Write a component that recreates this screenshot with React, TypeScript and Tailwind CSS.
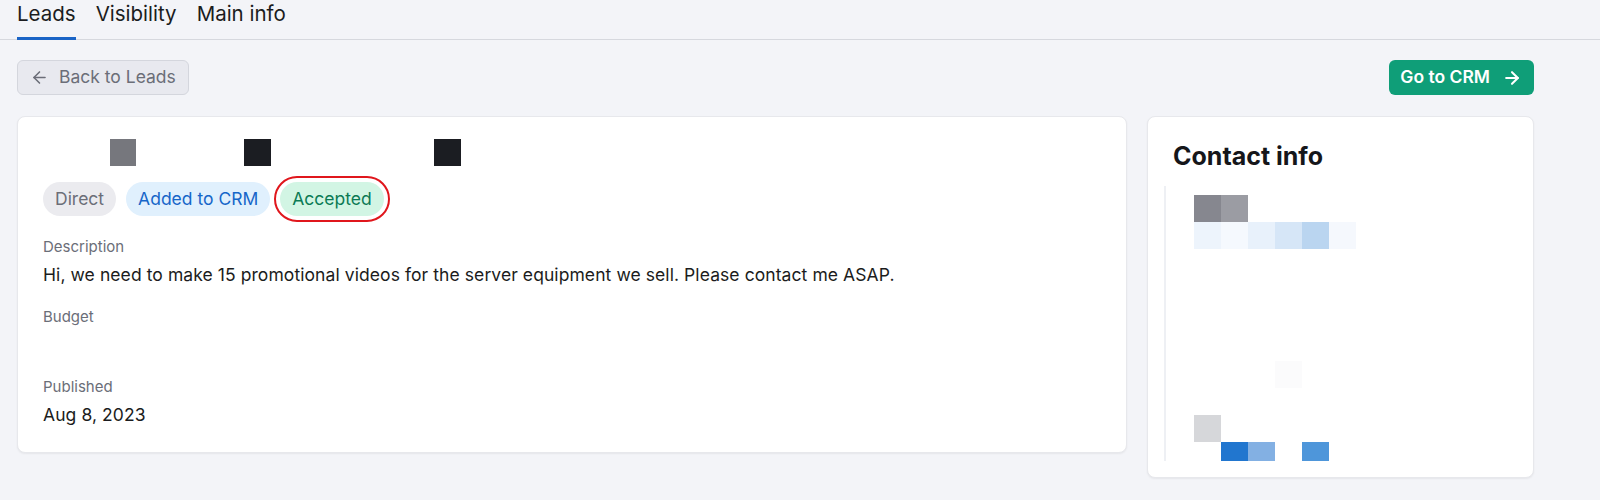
import React from 'react';
import { ArrowLeft, ArrowRight } from 'lucide-react';

const font = { fontFamily: 'Inter, "Noto Sans", sans-serif' };

const Block: React.FC<{ color: string }> = ({ color }) => (
  <div className={`w-[27px] h-[27px] shrink-0 ${color}`} />
);

const Field: React.FC<{ label: string; value?: string }> = ({ label, value }) => (
  <div className="flex flex-col gap-1.5">
    <div className="text-[15px] leading-5 text-[#6b6e78]">{label}</div>
    <div className="text-[17.5px] leading-6 tracking-[0.08px] text-[#1b1c20] min-h-6">{value}</div>
  </div>
);

const App: React.FC = () => {
  return (
    <div className="min-h-[500px] bg-[#f3f4f8]" style={font}>
      {/* Tabs */}
      <div className="flex h-10 gap-5 border-b border-[#d6d8de] pl-[17px]">
        <div className="relative text-[20.5px] leading-7 text-[#1b1c20]">
          Leads
          <span className="absolute left-0 right-0 -bottom-px h-[3px] bg-[#1a64c6]" />
        </div>
        <div className="text-[20.5px] leading-7 text-[#1b1c20]">Visibility</div>
        <div className="text-[20.5px] leading-7 text-[#1b1c20]">Main info</div>
      </div>

      <div className="pl-[17px] pr-[66px] pt-5">
        {/* Actions */}
        <div className="flex justify-between items-center">
          <button className="flex items-center gap-[10px] h-[35px] px-3 rounded-md border border-[#d4d6dd] bg-[#e8e9ef] text-[17.5px] text-[#6b6e78]">
            <ArrowLeft size={19} strokeWidth={2} />
            Back to Leads
          </button>
          <button className="flex items-center gap-3 h-[35px] pl-[11px] pr-3 rounded-md bg-[#0f9e78] text-[17.5px] font-semibold text-white">
            Go to CRM
            <ArrowRight size={20} strokeWidth={2.5} />
          </button>
        </div>

        <div className="flex gap-5 mt-[21px] items-start">
          {/* Lead card */}
          <div className="w-[1110px] h-[337px] rounded-lg bg-white border border-[#e7e8ec] shadow-[0_1px_2px_rgba(0,0,0,0.06)] pl-[25px] pr-6 pt-[22px]">
            <div className="flex h-[27px]">
              <div className="ml-[67px] w-[26px] h-[27px] bg-[#76777d]" />
              <div className="ml-[108px] w-[27px] h-[27px] bg-[#1b1d22]" />
              <div className="ml-[163px] w-[27px] h-[27px] bg-[#1b1d22]" />
            </div>
            <div className="flex gap-[10px] mt-4">
              <span className="px-3 h-[34px] flex items-center rounded-full bg-[#ebebef] text-[17.5px] text-[#6b6e78]">Direct</span>
              <span className="px-3 h-[34px] flex items-center rounded-full bg-[#e0f0fd] text-[17.5px] text-[#1666c9]">Added to CRM</span>
              <span className="px-3 h-[34px] flex items-center rounded-full bg-[#d2f5e4] text-[17.5px] text-[#0b7a55] outline-2 outline-offset-[4px] outline-[#e0161c]">Accepted</span>
            </div>
            <div className="flex flex-col gap-5 mt-[21px]">
              <Field
                label="Description"
                value="Hi, we need to make 15 promotional videos for the server equipment we sell. Please contact me ASAP."
              />
              <Field label="Budget" />
              <Field label="Published" value="Aug 8, 2023" />
            </div>
          </div>

          {/* Contact card */}
          <div className="w-[387px] h-[362px] rounded-lg bg-white border border-[#e7e8ec] shadow-[0_1px_2px_rgba(0,0,0,0.06)] pl-[25px] pt-6">
            <div className="text-[25px] leading-[30px] font-bold text-[#15161a]">Contact info</div>
            <div className="flex mt-[15px] ml-[-9px] h-[275px] overflow-hidden">
              <div className="w-[2px] bg-[#eef0f4] shrink-0" />
              <div className="ml-7 pt-[9px] flex flex-col">
                <div className="flex">
                  <Block color="bg-[#86878f]" />
                  <Block color="bg-[#9b9ca3]" />
                </div>
                <div className="flex">
                  <Block color="bg-[#edf4fc]" />
                  <Block color="bg-[#f5f9fe]" />
                  <Block color="bg-[#e8f1fb]" />
                  <Block color="bg-[#d6e6f7]" />
                  <Block color="bg-[#bad5f0]" />
                  <Block color="bg-[#f5f8fd]" />
                </div>
                <div className="flex mt-[112px]">
                  <div className="w-[81px]" />
                  <Block color="bg-[#fbfbfc]" />
                </div>
                <div className="flex mt-[27px]">
                  <Block color="bg-[#d6d7da]" />
                </div>
                <div className="flex">
                  <div className="w-[27px]" />
                  <Block color="bg-[#2176cf]" />
                  <Block color="bg-[#83b0e3]" />
                  <div className="w-[27px]" />
                  <Block color="bg-[#4e96da]" />
                </div>
              </div>
            </div>
          </div>
        </div>
      </div>
    </div>
  );
};

export default App;
